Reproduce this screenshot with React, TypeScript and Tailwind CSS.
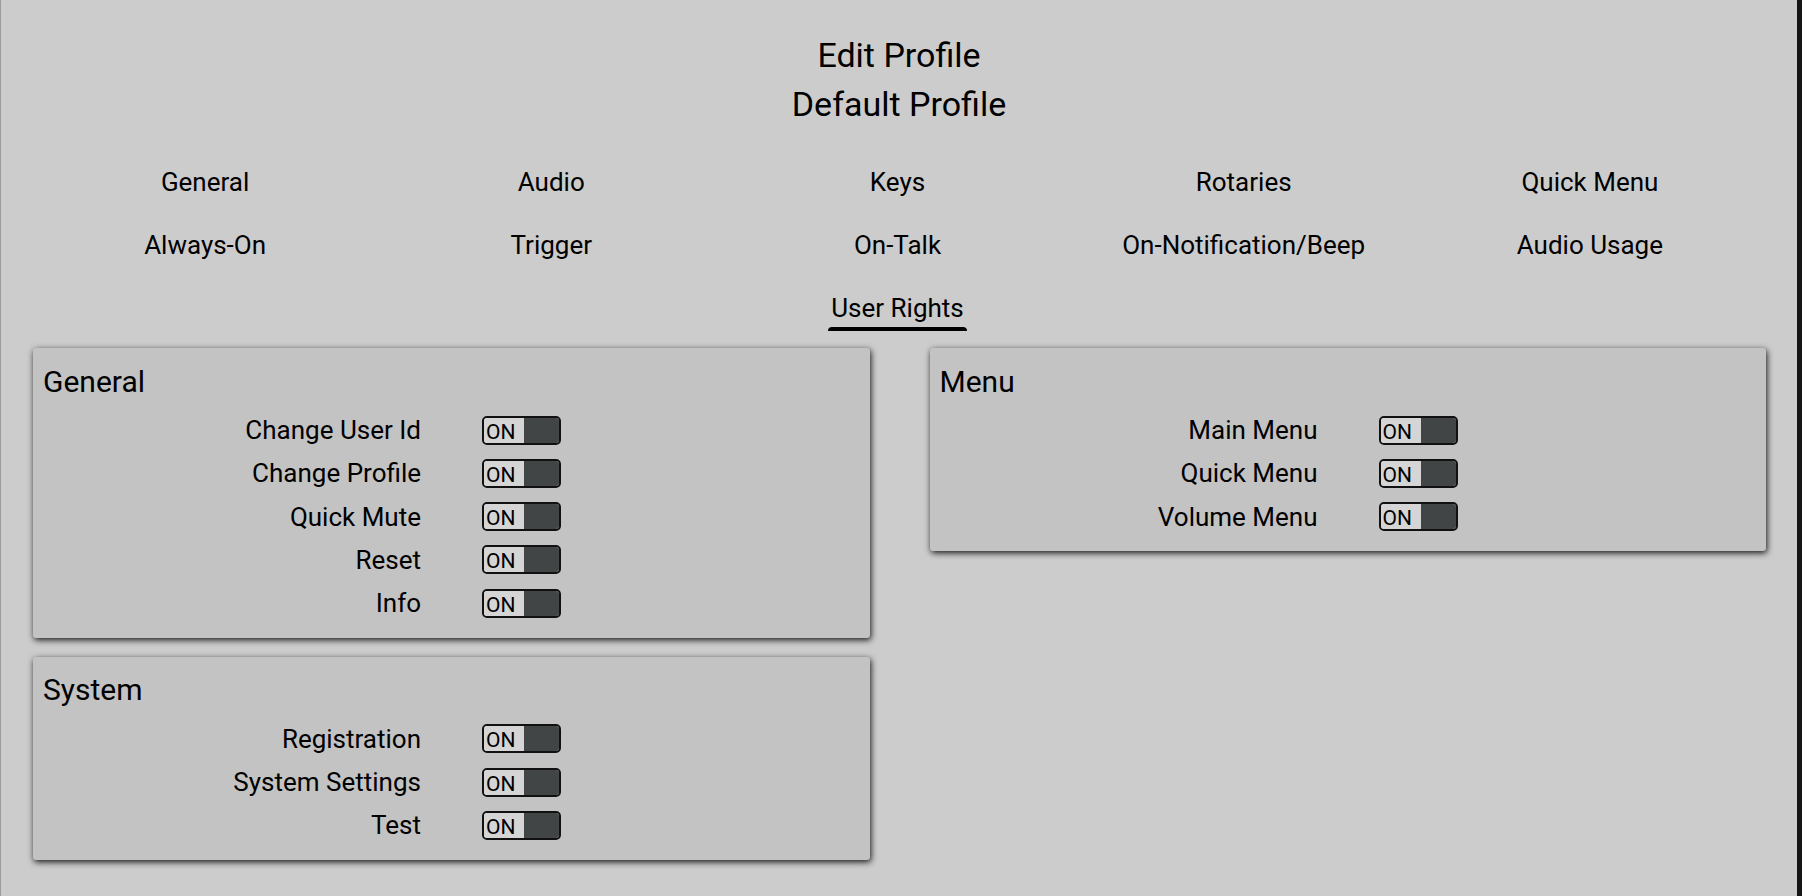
import React from 'react';

const tabs = [
  'General', 'Audio', 'Keys', 'Rotaries', 'Quick Menu',
  'Always-On', 'Trigger', 'On-Talk', 'On-Notification/Beep', 'Audio Usage',
];

function Toggle() {
  return (
    <div className="flex h-[29px] w-[79px] overflow-hidden rounded-[5px] border-2 border-[#111]">
      <div className="flex w-[40px] items-end bg-[#d5d5d5] pl-[2px] text-[21px] leading-[21px] text-black">ON</div>
      <div className="flex-1 bg-[#414545]" />
    </div>
  );
}

function Panel({ title, rows }: { title: string; rows: string[] }) {
  return (
    <div className="rounded-[3px] bg-[#c3c3c3] pt-[15.5px] pb-[13px] pl-[10px] shadow-[1px_2px_6px_rgba(0,0,0,0.9)]">
      <div className="h-[36px] text-[30px] leading-[36px]">{title}</div>
      <div className="mt-[9px]">
        {rows.map((r) => (
          <div key={r} className="flex h-[43.25px] items-center">
            <div className="w-[378px] text-right text-[26px] leading-[30px]">{r}</div>
            <div className="ml-[61px]">
              <Toggle />
            </div>
          </div>
        ))}
      </div>
    </div>
  );
}

export default function App() {
  return (
    <div className="flex h-[896px] w-[1802px] overflow-hidden bg-[#cccccc] font-['Roboto',sans-serif] text-black">
      <div className="flex-1 border-l border-[#9c9c9c] pt-[31px]">
        {/* heading */}
        <div className="text-center text-[34px] leading-[49px]">
          <div>Edit Profile</div>
          <div>Default Profile</div>
        </div>

        {/* tab grid */}
        <div className="mt-[21px] ml-[31px] grid w-[1731px] grid-cols-5">
          {tabs.map((t) => (
            <div key={t} className="h-[63px] pt-[17px] text-center text-[26px] leading-[30px]">{t}</div>
          ))}
          <div className="col-start-3 flex h-[63px] justify-center pt-[17px]">
            <div className="flex flex-col items-stretch">
              <span className="px-[3px] text-[26px] leading-[30px]">User Rights</span>
              <div className="mt-[4px] h-[4px] rounded-t-[4px] bg-black" />
            </div>
          </div>
        </div>

        {/* panels */}
        <div className="mt-[9px] grid grid-cols-2 gap-x-[60px] pl-[32px] pr-[31px]">
          <div className="flex flex-col gap-[19px]">
            <Panel title="General" rows={['Change User Id', 'Change Profile', 'Quick Mute', 'Reset', 'Info']} />
            <Panel title="System" rows={['Registration', 'System Settings', 'Test']} />
          </div>
          <div>
            <Panel title="Menu" rows={['Main Menu', 'Quick Menu', 'Volume Menu']} />
          </div>
        </div>
      </div>
      <div className="w-[5px] bg-[#151515]" />
    </div>
  );
}
